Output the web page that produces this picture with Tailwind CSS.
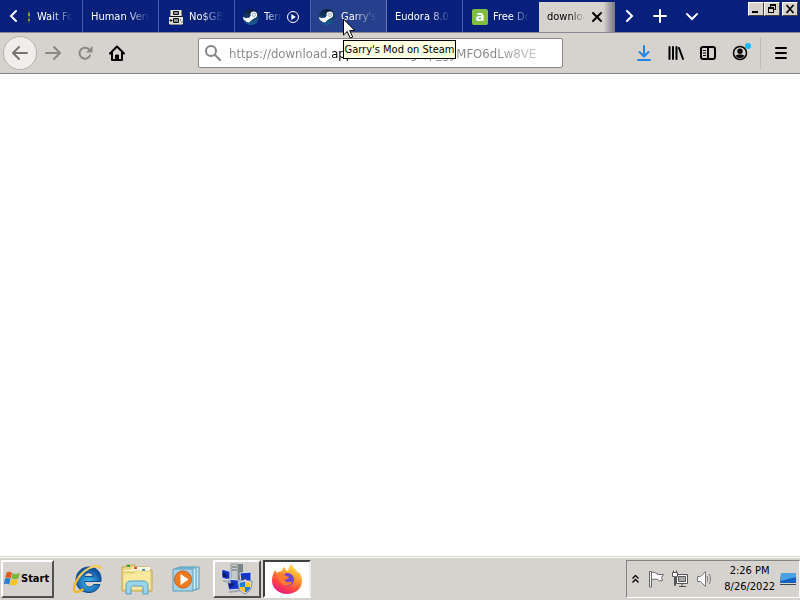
<!DOCTYPE html>
<html lang="en">
<head>
    <meta charset="UTF-8">
    <meta name="viewport" content="width=device-width, initial-scale=1.0">
    <title>Desktop</title>
    <script src="https://cdn.jsdelivr.net/npm/@tailwindcss/browser@4"></script>
</head>
<body class="flex flex-col min-h-screen bg-white font-['DejaVu_Sans_Condensed','DejaVu_Sans',sans-serif] text-[11px] text-black overflow-hidden">

    <!-- Shared icons -->
    <svg class="absolute w-0 h-0">
        <defs>
            <linearGradient id="steamBg" x1="0" y1="0" x2="0" y2="1">
                <stop offset="0" stop-color="#0c1a3c"/>
                <stop offset="1" stop-color="#1c5f95"/>
            </linearGradient>
        </defs>
        <symbol id="steam" viewBox="0 0 16 16">
            <circle cx="8" cy="8" r="8" fill="url(#steamBg)"/>
            <path d="M0 8 5 10 8 6.500 13 8 8 11.500 6 13.500 .8 11z" fill="#fff"/>
            <circle cx="5" cy="11" r="2.300" fill="#fff"/>
            <circle cx="10.800" cy="5.800" r="3.300" fill="#fff"/>
            <circle cx="10.800" cy="5.800" r="1.800" fill="#dfe6ee" stroke="#7f93b2" stroke-width=".6"/>
        </symbol>
    </svg>

    <!-- Tab strip -->
    <header class="flex h-[33px] shrink-0 bg-[#06207c] border-b border-[#8b8a94] text-white">
        <button class="w-7 shrink-0 flex items-center justify-center" aria-label="Scroll tabs left">
            <svg class="w-3 h-3" viewBox="0 0 12 12" fill="none" stroke="#fff" stroke-width="2" stroke-linecap="round"><path d="M8 1 3 6l5 5"/></svg>
        </button>
        <nav class="flex min-w-0">
            <a href="#" class="w-[55px] pt-[2px] flex items-center gap-[7px] border-r border-[#4a5fa5]">
                <svg class="w-[2px] h-4 shrink-0" viewBox="0 0 2 16"><path d="M0 2h2v12H0z" fill="#2c4a3a"/><path d="M0 4h2v3H0zM0 10h2v2H0z" fill="#8f9e30"/></svg>
                <span class="w-9 overflow-hidden whitespace-nowrap mask-r-from-40%">Wait For</span>
            </a>
            <a href="#" class="w-[76px] pt-[2px] flex items-center px-2 border-r border-[#4a5fa5]">
                <span class="w-[60px] overflow-hidden whitespace-nowrap mask-r-from-60%">Human Verification</span>
            </a>
            <a href="#" class="w-[76px] pt-[2px] flex items-center gap-1 px-2 border-r border-[#4a5fa5]">
                <svg class="w-[18px] h-4 shrink-0" viewBox="0 0 18 16">
                    <path d="M3 1h12v8H3zM2 8h14v7H2z" fill="#e6e6e0"/>
                    <path d="M3.500 1v7M14.500 1v7M2.500 15.500h13" stroke="#8d8d88"/>
                    <path d="M6.500 2.500h5v3h-5zM6.500 9.500h5v4h-5z" fill="#8a8f8a" stroke="#111"/>
                    <path d="M3 7.500h12M2.500 11.500h3M4 10v3M13 11h1M14.500 13h1" stroke="#111"/>
                </svg>
                <span class="w-[34px] overflow-hidden whitespace-nowrap mask-r-from-35%">No$GBA</span>
            </a>
            <a href="#" class="w-[76px] pt-[2px] flex items-center gap-1 px-2 border-r border-[#4a5fa5]">
                <svg class="w-4 h-4 shrink-0"><use href="#steam"/></svg>
                <span class="w-[18px] ml-px overflow-hidden whitespace-nowrap mask-r-from-10%">Terraria</span>
                <svg class="w-[14px] h-[14px] shrink-0" viewBox="0 0 14 14"><circle cx="7" cy="7" r="5.500" fill="none" stroke="#fff"/><path d="M5.300 4v6l4.500-3z" fill="#fff"/></svg>
            </a>
            <a href="#" class="w-[76px] pt-[2px] flex items-center gap-[6px] px-2 border-r border-[#6073ad] bg-[#26408d]">
                <svg class="w-4 h-4 shrink-0"><use href="#steam"/></svg>
                <span class="w-9 overflow-hidden whitespace-nowrap mask-r-from-30%">Garry's Mod</span>
            </a>
            <a href="#" class="w-[76px] pt-[2px] flex items-center px-2 border-r border-[#4a5fa5]">
                <span class="w-[56px] overflow-hidden whitespace-nowrap mask-r-from-60%">Eudora 8.0.0</span>
            </a>
            <a href="#" class="w-[76px] pt-[2px] flex items-center gap-1 pl-[9px]">
                <span class="w-4 h-4 shrink-0 rounded-xs bg-[#80bd42] text-[15px] leading-3 text-center font-bold font-['Open_Sans',sans-serif]">a</span>
                <span class="w-9 ml-px overflow-hidden whitespace-nowrap mask-r-from-50%">Free Download</span>
            </a>
            <a href="#" class="w-[76px] mt-[2px] flex items-center gap-[6px] pl-2 bg-gradient-to-r from-[#d6d3ce] from-85% to-[#77777f] text-black">
                <span class="w-[38px] overflow-hidden whitespace-nowrap mask-r-from-60%">download.</span>
                <svg class="w-3 h-3" viewBox="0 0 12 12" stroke="#000" stroke-width="2" stroke-linecap="round"><path d="M2 2l8 8M10 2l-8 8"/></svg>
            </a>
        </nav>
        <div class="flex items-center gap-[14px] pl-[7px]">
            <button class="w-4 flex justify-center" aria-label="Scroll tabs right"><svg class="w-3 h-3" viewBox="0 0 12 12" fill="none" stroke="#fff" stroke-width="2" stroke-linecap="round"><path d="M3 1l5 5-5 5"/></svg></button>
            <button aria-label="New tab"><svg class="w-4 h-4" viewBox="0 0 16 16" stroke="#fff" stroke-width="2" stroke-linecap="round"><path d="M8 2v12M2 8h12"/></svg></button>
            <button class="ml-[2px]" aria-label="List all tabs"><svg class="w-4 h-4" viewBox="0 0 16 16" fill="none" stroke="#fff" stroke-width="2" stroke-linecap="round"><path d="M3 6l5 5 5-5"/></svg></button>
        </div>
        <div class="ml-auto flex pt-[2px] pr-[2px]">
            <button class="w-4 h-[14px] bg-[#d6d3ce] border border-t-white border-l-white border-b-[#404040] border-r-[#404040]" aria-label="Minimize"><svg class="w-[14px] h-3" viewBox="0 0 14 12"><path d="M3 8h6v2H3z"/></svg></button>
            <button class="w-4 h-[14px] bg-[#d6d3ce] border border-t-white border-l-white border-b-[#404040] border-r-[#404040]" aria-label="Restore"><svg class="w-[14px] h-3" viewBox="0 0 14 12"><path d="M5 1h6v6H9V6h1V3H6v1H5zM3 4h6v6H3zM4 6v3h4V6z" fill-rule="evenodd"/></svg></button>
            <button class="w-4 h-[14px] ml-[2px] bg-[#d6d3ce] border border-t-white border-l-white border-b-[#404040] border-r-[#404040]" aria-label="Close"><svg class="w-[14px] h-3" viewBox="0 0 14 12" stroke="#000" stroke-width="1.700"><path d="M3.500 2l7 8M10.500 2l-7 8"/></svg></button>
        </div>
    </header>

    <!-- Navigation toolbar -->
    <div class="flex items-center h-[41px] shrink-0 bg-[#d6d3ce] border-b border-[#848484] pl-[3px] pr-[11px]">
        <div class="flex items-center w-[195px] shrink-0">
            <button class="w-[34px] h-[34px] rounded-full bg-[#efeeeb] border border-[#b5b2ad] flex items-center justify-center" aria-label="Back">
                <svg class="w-4 h-4" viewBox="0 0 16 16" fill="none" stroke="#77756f" stroke-width="2" stroke-linecap="round" stroke-linejoin="round"><path d="M15 8H1.500M7 2 1 8l6 6"/></svg>
            </button>
            <button class="ml-2 w-4" aria-label="Forward"><svg class="w-4 h-4" viewBox="0 0 16 16" fill="none" stroke="#8a8883" stroke-width="2" stroke-linecap="round" stroke-linejoin="round"><path d="M1 8h13.500M9 2l6 6-6 6"/></svg></button>
            <button class="ml-4 w-4" aria-label="Reload"><svg class="w-4 h-4" viewBox="0 0 16 16"><path d="M13 10.500A5.500 5.500 0 1 1 12.500 5" fill="none" stroke="#8a8883" stroke-width="2" stroke-linecap="round"/><path d="M15.500 1v6.500H9z" fill="#8a8883"/></svg></button>
            <button class="ml-4 w-4" aria-label="Home"><svg class="w-4 h-4" viewBox="0 0 16 16" fill="none" stroke="#000" stroke-width="2" stroke-linejoin="round" stroke-linecap="round"><path d="M1 8.500 8 1.500l7 7M3 8v7h10V8"/><path d="M6.500 15v-5h3v5z" fill="#000" stroke-width="1"/></svg></button>
        </div>
        <form class="flex items-center w-[365px] h-[30px] pl-[6px] bg-white border border-[#8a8883] rounded-xs">
            <label for="url" class="shrink-0 mr-2" aria-label="Address"><svg class="w-4 h-4" viewBox="0 0 16 16" fill="none" stroke="#848484" stroke-width="2" stroke-linecap="round"><circle cx="6" cy="6" r="5"/><path d="M10 10l5 5"/></svg></label>
            <!-- host is black, the rest of the address grey -->
            <input id="url" type="text" value="https://download.apponic.com/ge/p_gyMFO6dLw8VE" class="w-[310px] h-7 pt-px text-[13px] outline-none text-transparent bg-clip-text bg-[linear-gradient(to_right,#848484_102px,#000_102px,#000_176px,#848484_176px,#848484_265px,#84848480_300px)]">
        </form>
        <div class="ml-auto flex items-center gap-4">
            <button aria-label="Downloads"><svg class="w-4 h-4" viewBox="0 0 16 16" fill="none" stroke="#2484e0" stroke-width="2" stroke-linecap="round" stroke-linejoin="round"><path d="M8 1v10M3.500 7 8 11.500 12.500 7M2 15h12"/></svg></button>
            <button aria-label="Library"><svg class="w-4 h-4" viewBox="0 0 16 16" stroke="#000" stroke-width="2" stroke-linecap="round"><path d="M1.500 2v12M5 2v12M8.500 2v12M11 3l4 11"/></svg></button>
            <button aria-label="Sidebars"><svg class="w-4 h-4" viewBox="0 0 16 16" fill="none" stroke="#000" stroke-width="2"><rect x="1" y="2" width="14" height="12" rx="2"/><path d="M8 2v12"/><path d="M3 5.500h3M3 8h3M3 10.500h3" stroke-width="1"/></svg></button>
            <button aria-label="Account"><svg class="w-5 h-5 -mr-1" viewBox="0 0 20 20"><circle cx="8" cy="10" r="6.500" fill="none" stroke="#000" stroke-width="1.500"/><circle cx="8" cy="8.300" r="2.700"/><path d="M3.500 12.500c2-1.500 7-1.500 9 0-1 2-3 2.500-4.500 2.500s-3.500-.5-4.500-2.500z"/><circle cx="16" cy="3" r="3" fill="#19b5fe"/></svg></button>
            <div class="w-px h-8 -mx-1 bg-[#c0bdb8]"></div>
            <button aria-label="Menu"><svg class="w-4 h-4" viewBox="0 0 16 16" stroke="#000" stroke-width="2" stroke-linecap="round"><path d="M3 3h10M3 8h10M3 13h10"/></svg></button>
        </div>
    </div>

    <main class="flex-1 bg-white"></main>

    <!-- Taskbar -->
    <footer class="flex h-11 shrink-0 bg-[#d6d3ce] border-t border-[#d6d3ce] pt-[3px] pb-[2px] shadow-[inset_0_1px_0_#fff]">
        <button class="w-[53px] ml-px flex items-center gap-px pl-px border-2 border-t-white border-l-white border-b-[#505050] border-r-[#505050] font-bold">
            <svg class="w-4 h-4 shrink-0" viewBox="0 0 16 16">
                <path d="M2.500 1.500C4 .5 6.500 .5 8 1.700L6.800 7.300C5 6.300 3 6.200 1.200 7.200z" fill="#e35a24"/>
                <path d="M8.500 2C10 3.200 13 3.200 15.800 2l-1.500 5.700C12 8.700 9 8.600 7.300 7.600z" fill="#7ab53c"/>
                <path d="M1 7.800c2-1 4-.9 5.500.1L5.200 13.500C3.500 12.500 1.500 12.500-.3 13.300z" fill="#2f7fd0"/>
                <path d="M7.100 8.200c2 1 4.500 1 7 0l-1.500 5.500c-2 1-4.800.9-6.900-.2z" fill="#f7c325"/>
            </svg>
            Start
        </button>
        <div class="flex items-center ml-[10px]">
            <button class="w-12 flex justify-center" aria-label="Internet Explorer">
                <svg class="w-8 h-8" viewBox="0 0 32 32">
                    <defs><radialGradient id="ie" cx=".5" cy=".6"><stop offset="0" stop-color="#43c3f5"/><stop offset="1" stop-color="#1155a3"/></radialGradient></defs>
                    <path d="M29 18.500H12.500c0 6 7 7 9 3H28C26 27 22 29.500 17 29.500 9 29.500 4 24 4 17S9 4 17 4s13 6 12 14.500zM12.500 13.500h8.500C20.500 8.500 13 8.500 12.500 13.500z" fill="url(#ie)" stroke="#124c8f" fill-rule="evenodd"/>
                    <path d="M29 6C28 0 14 4 7 14 1 23 0 30 5.500 29c2-.5 4-1.500 6-3" fill="none" stroke="#f0b62c" stroke-width="2.300"/>
                    <path d="M29 6C28 0 14 4 7 14" fill="none" stroke="#ffe48a" stroke-width="1"/>
                </svg>
            </button>
            <button class="w-[50px] flex justify-center" aria-label="Windows Explorer">
                <svg class="w-8 h-8" viewBox="0 0 32 32">
                    <path d="M1 4h4V2h9v2h14v3h3v21H1z" fill="#ecd57c" stroke="#c6a648"/>
                    <path d="M3 7h8l1-3h17v4H3z" fill="#fffbe3"/>
                    <path d="M6 2h3v2H6z" fill="#2f9b45"/><path d="M13 4h3v2h-3z" fill="#db5327"/><path d="M21 6h3v2h-3z" fill="#378bd1"/>
                    <path d="M2 10h11l2-2h15v19H2z" fill="#f8e99f" stroke="#dcc36a" stroke-width=".7"/>
                    <path d="M5 31V23c0-4 2-5 5-5h12c3 0 5 1 5 5v8h-5v-6c0-2-1-2-2-2h-8c-1 0-2 0-2 2v6z" fill="#9bd5ec" stroke="#559fc4"/>
                </svg>
            </button>
            <button class="w-12 flex justify-center" aria-label="Media Player">
                <svg class="w-7 h-7" viewBox="0 0 28 28">
                    <path d="M7 2h20v22H7z" fill="#c7e4f1" stroke="#4d98bd"/><path d="M4 3h20v22H4z" fill="#d5edf6" stroke="#4d98bd"/><path d="M1 4h20v22H1z" fill="#a4d2e8" stroke="#5b9dbd"/>
                    <circle cx="11" cy="14.500" r="8.500" fill="#ef7b20" stroke="#d35b11"/><path d="M8.500 9v11l8-5.500z" fill="#fff"/>
                </svg>
            </button>
        </div>
        <button class="w-12 ml-[3px] flex items-center justify-center border-2 border-t-white border-l-white border-b-[#505050] border-r-[#505050]" aria-label="Network setup">
            <svg class="w-8 h-8" viewBox="0 0 32 32">
                <path d="M10 1h7v16h-7z" fill="#c6caca" stroke="#8b9296"/><path d="M17 1h5v16h-5z" fill="#7d8488"/><path d="M11 4h5M11 7h5" stroke="#60686c"/>
                <path d="M1 6l8 2.500v9L1 15zM19 10l11-1v9l-10 1zM6 16l11 1 3 9-12 1z" fill="#1435c8" stroke="#dbe1ea"/>
                <path d="M1.500 8l5 4v3l-5-1.500zM7 18l7 3-6 5z" fill="#071d79"/><path d="M2 18l8 1.500M8 29l11-1.500M20 21l8-1" stroke="#a2a9b2" stroke-width="2"/>
                <path d="M24 16c2 2 4 2 7 2 0 7-2 11-7 13-5-2-7-6-7-13 3 0 5 0 7-2z" fill="#e8edf1" stroke="#7d8992"/>
                <path d="M24 18v6h-5.500v-4.500c2 0 4 0 5.500-1.500zM24 24h5.500c-.5 3-2.500 4.500-5.500 5.500z" fill="#2879d3"/><path d="M24 18c1.500 1.500 3.500 1.500 5.500 1.500V24H24zM18.500 24H24v5.500c-3-1.500-5-2.500-5.500-5.500z" fill="#f3c92c"/>
            </svg>
        </button>
        <button class="w-12 ml-[2px] flex items-center justify-center bg-white border-2 border-t-[#404040] border-l-[#404040] border-b-white border-r-[#eee]" aria-label="Firefox">
            <svg class="w-8 h-8" viewBox="0 0 32 32">
                <defs><linearGradient id="fox" x1=".8" y1="0" x2=".3" y2="1"><stop offset="0" stop-color="#fff04b"/><stop offset=".4" stop-color="#ff9a2e"/><stop offset=".7" stop-color="#ff4940"/><stop offset="1" stop-color="#e31587"/></linearGradient></defs>
                <path d="M4 7l2 3c1-1 3-2 5-2 0-2 2-4 3-4 0 2 1 4 3 4 1-3 1-5 4-7 0 4 4 5 6 9l1-1c2 3 3 6 3 9 0 8-7 13-15 13S1 25 1 18c0-4 1-8 3-11z" fill="url(#fox)"/>
                <circle cx="16.500" cy="16.500" r="6.500" fill="#6b48d2"/>
                <path d="M8 12c3-2 6-1 7 1l3 1c0 2-4 2-4 4 2 2 5 0 7 1-1 4-8 5-11 1-2-2-3-5-2-8z" fill="#ff7a32"/>
            </svg>
        </button>

        <!-- Notification area -->
        <div class="ml-auto flex items-center w-[174px] pl-[5px] pr-[3px] border border-t-[#848484] border-l-[#848484] border-white">
            <button aria-label="Show hidden icons"><svg class="w-[7px] h-2" viewBox="0 0 7 8" fill="none" stroke="#000" stroke-width="1.300"><path d="M.5 3.500l3-3 3 3M.5 7.500l3-3 3 3"/></svg></button>
            <button class="ml-2" aria-label="Action Center"><svg class="w-[18px] h-[18px]" viewBox="0 0 18 18" fill="#fff" stroke="#666"><path d="M2.500 1.500h2V17h-2z"/><path d="M4.500 2.500c3-1 4 1 6 1v1h6l-2 3 1 3c-2 1-4 0-5-1-2-1-4 0-6 0z"/></svg></button>
            <button class="ml-[6px]" aria-label="Network"><svg class="w-[18px] h-[18px]" viewBox="0 0 18 18" stroke="#555"><path d="M5.500 4.500h11v9h-11z" fill="#fff"/><path d="M7.500 6.500h7v5h-7z" fill="#aaa"/><path d="M8 16.500h7M11 14v2" fill="none"/><path d="M1.500 2.500h5v4h-2v9h-1v-9h-2z" fill="#fff"/><path d="M2.500 .5v2M5.500 .5v2"/></svg></button>
            <button class="ml-[6px]" aria-label="Volume"><svg class="w-[18px] h-[18px]" viewBox="0 0 18 18" fill="none" stroke="#777"><path d="M2.500 6.500h3l5-5v15l-5-5h-3z" fill="#fff"/><path d="M12 6c1 2 1 4 0 6M14 4c2 3 2 7 0 10"/></svg></button>
            <div class="ml-auto text-center leading-4"><div>2:26 PM</div><div>8/26/2022</div></div>
            <button class="ml-[5px]" aria-label="Show desktop"><svg class="w-4 h-4" viewBox="0 0 16 16"><path d="M1 2h15v10H0z" fill="#1462be"/><path d="M1 2h15v4L1 10z" fill="#4aa1e6"/><path d="M0 13h16v1H0z" fill="#3a4858"/></svg></button>
        </div>
    </footer>

    <!-- Tooltip and pointer -->
    <div role="tooltip" class="absolute left-[343px] top-10 w-[113px] h-[19px] pt-[2px] flex items-center justify-center whitespace-nowrap bg-[#ffffe1] border border-black">Garry's Mod on Steam</div>
    <svg class="absolute left-[343px] top-[18px] w-3 h-[21px]" viewBox="0 0 12 21"><path d="M.5 1v16l3.700-3.500L7.200 20l2.500-1-3-6.500h5z" fill="#fff" stroke="#000"/></svg>
</body>
</html>
